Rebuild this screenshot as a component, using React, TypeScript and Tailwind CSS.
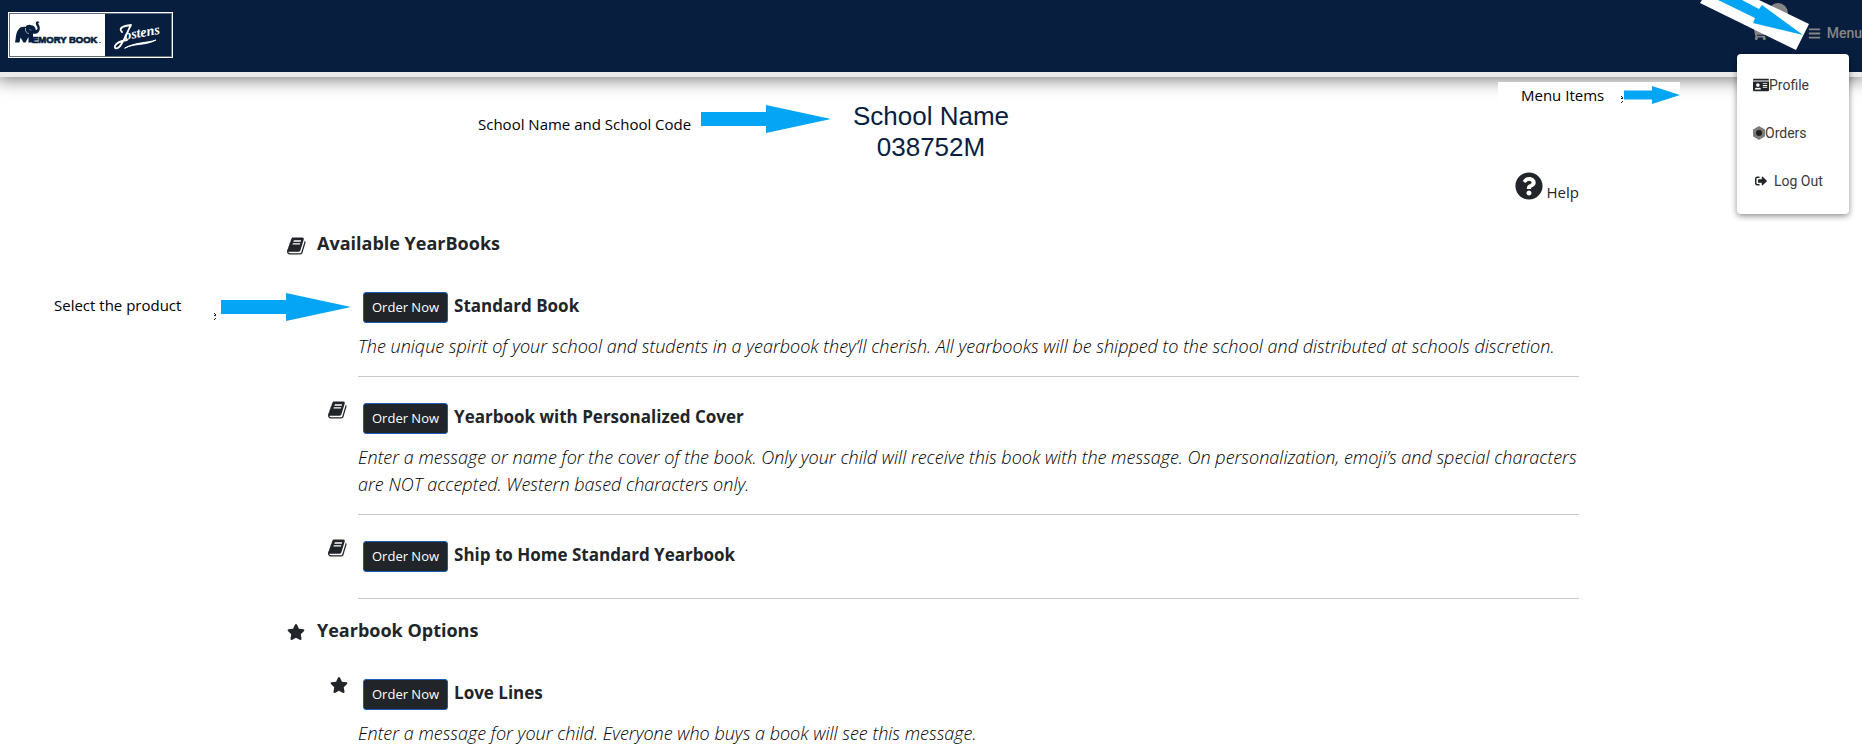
import React from "react";
import {
  FaBars,
  FaIdCard,
  FaQuestionCircle,
  FaShoppingCart,
  FaSignOutAlt,
  FaStar,
} from "react-icons/fa";

const BOOK_PATH =
  "M1639 478q40 57 18 129l-275 906q-19 64-76.500 107.500t-122.500 43.500h-923q-77 0-148.500-53.500t-99.500-131.500q-24-67-2-127 0-4 3-27t4-37q1-8-3-21.500t-3-19.500q2-11 8-21t16.500-23.500 16.500-23.500q23-38 45-91.500t30-91.500q3-10 .500-30t-.500-28q3-11 17-28t17-23q21-36 42-92t25-90q1-9-2.500-32t.500-28q4-13 22-30.500t22-22.500q19-26 42.500-84.500t27.500-96.500q1-8-3-25.500t-2-26.500q2-8 9-18t18-23 17-21q8-12 16.500-30.500t15-35 16-36 19.500-32 26.500-23.500 36-11.500 47.500 5.500l-1 3q38-9 51-9h761q74 0 114 56t18 130l-274 906q-36 119-71.500 153.500t-128.500 34.500h-869q-27 0-38 15-11 16-1 43 24 70 144 70h923q29 0 56-15.500t35-41.500l300-987q7-22 5-57 38 15 59 43zm-1064 2q-4 13 2 22.500t20 9.500h608q13 0 25.500-9.500t16.500-22.500l21-64q4-13-2-22.500t-20-9.500h-608q-13 0-25.500 9.500t-16.500 22.500zm-83 256q-4 13 2 22.500t20 9.500h608q13 0 25.500-9.500t16.500-22.500l21-64q4-13-2-22.500t-20-9.500h-608q-13 0-25.500 9.500t-16.500 22.500z";

function BookIcon() {
  return (
    <svg viewBox="0 0 1792 1792" className="size-5 fill-current" aria-hidden="true">
      <path d={BOOK_PATH} />
    </svg>
  );
}

function StarIcon() {
  return <FaStar className="size-[18px]" aria-hidden="true" />;
}

function Arrow({ className }: { className: string }) {
  return (
    <svg viewBox="0 0 130 28" preserveAspectRatio="none" className={className} aria-hidden="true">
      <path d="M0 7H65V0L130 14L65 28V21H0Z" fill="#03a5f4" />
    </svg>
  );
}

function Speck() {
  return (
    <svg viewBox="0 0 3 8" className="h-2 w-[3px]" aria-hidden="true">
      <path d="M0 0H1V1H2V3H0V2H1V1H0ZM1 5H2V6H1V7H0V6H1Z" fill="#222" />
    </svg>
  );
}

function Logo() {
  return (
    <svg viewBox="0 0 165 46" className="h-[46px] w-[165px]" role="img" aria-label="Memory Book Jostens">
      <rect width="165" height="46" fill="#fff" />
      <rect x="1.500" y="1.500" width="162" height="43" fill="none" stroke="#5f6c84" />
      <rect x="97" y="2" width="66" height="42" fill="#071e3f" />
      <path
        d="M7 30.500C8 27 7.500 21 10.500 17.500C12 15 15 14.500 17.500 15C18.500 12.500 22 12 24 13.500C26.500 13.500 27.500 16 27.800 18C29.500 18 30 16.500 29 14.500C27.500 12 27.500 9.500 29.500 9.200L31.500 10L30 11.500C32.500 14.500 32.500 19 29.500 21C28 22 26 22 25 21.500V30.500H20.500V25L17.500 30.500H15.500L12.500 25.500L11.500 30.500Z"
        fill="#071e3f"
      />
      <path d="M17.500 16C17 19 18.500 21.500 21 21.500M21.500 17L23 18.500" fill="none" stroke="#fff" strokeWidth="0.600" />
      <text
        x="24"
        y="30.500"
        fontSize="9.500"
        fill="#071e3f"
        stroke="#071e3f"
        strokeWidth="0.700"
        fontFamily="Liberation Sans, Arial, sans-serif"
        fontWeight="700"
      >
        EMORY BOOK
      </text>
      <rect x="91" y="30" width="2" height="1" fill="#8791a3" />
      <g fill="none" stroke="#fff" strokeLinecap="round" strokeLinejoin="round">
        <path d="M114 20C110 16 115 14 123 13C120 18 118 25 114 31C111 37 106 38 107 34C108 31 113 29 119 28" strokeWidth="1.800" />
        <path d="M117 36C126 31 137 34 148 28C140 31 127 30 117 36Z" strokeWidth="1" fill="#fff" />
      </g>
      <text
        x="117"
        y="28"
        fontSize="14"
        fill="#fff"
        fontStyle="italic"
        fontWeight="700"
        fontFamily="Liberation Serif, Times New Roman, serif"
        transform="rotate(-10 117 28)"
      >
        ostens
      </text>
    </svg>
  );
}

function OrdersIcon() {
  return (
    <svg viewBox="0 0 12 14" className="h-[14px] w-3" aria-hidden="true">
      <path d="M6 0L12 3.500V10.500L6 14L0 10.500V3.500Z" fill="#858585" />
      <path d="M6 1V13M1 4L11 10M11 4L1 10M3 2L9 12M9 2L3 12M0 7H12" stroke="#555" strokeWidth="0.500" />
      <circle cx="6" cy="7" r="3" fill="#222" />
    </svg>
  );
}

type Item = { title: string; description?: string; icon?: React.ReactNode };

function Product({ title, description, icon }: Item) {
  return (
    <li className="flex">
      <div className="-mt-[3px] flex w-[75px] shrink-0 justify-end pr-[10px]">{icon}</div>
      <div className="min-w-0 grow border-b border-[#c8c9ca] pb-4">
        <div className="flex h-[41px] items-start gap-[6px] pl-[5px]">
          <button
            type="button"
            className="h-[31px] shrink-0 rounded-[3px] border border-[#1a5cb8] bg-[#212529] px-2 text-[13px] text-white"
          >
            Order Now
          </button>
          <h3 className="text-[17px] leading-7 font-bold">{title}</h3>
        </div>
        {description && (
          <p className="text-lg leading-[27px] font-light text-black italic">{description}</p>
        )}
      </div>
    </li>
  );
}

function Section({ title, icon, items }: { title: string; icon: React.ReactNode; items: Item[] }) {
  return (
    <section>
      <h2 className="flex h-[63px] items-start text-lg leading-7 font-bold">
        <span className="flex w-[34px] shrink-0 pt-[7px] pl-1">{icon}</span>
        {title}
      </h2>
      <ul className="flex flex-col gap-[26px]">
        {items.map((item) => (
          <Product key={item.title} {...item} />
        ))}
      </ul>
    </section>
  );
}

const BOOKS: Item[] = [
  {
    title: "Standard Book",
    description:
      "The unique spirit of your school and students in a yearbook they’ll cherish. All yearbooks will be shipped to the school and distributed at schools discretion.",
  },
  {
    title: "Yearbook with Personalized Cover",
    description:
      "Enter a message or name for the cover of the book. Only your child will receive this book with the message. On personalization, emoji’s and special characters are NOT accepted. Western based characters only.",
    icon: <BookIcon />,
  },
  { title: "Ship to Home Standard Yearbook", icon: <BookIcon /> },
];

const OPTIONS: Item[] = [
  {
    title: "Love Lines",
    description: "Enter a message for your child. Everyone who buys a book will see this message.",
    icon: <StarIcon />,
  },
];

export default function App() {
  return (
    <div className="relative h-screen overflow-hidden bg-white font-['Open_Sans','Noto_Sans',sans-serif] text-[#212529]">
      <header className="relative flex h-[77px] items-start justify-between border-b-[5px] border-[#ebebeb] bg-[#071e3f] pt-3 pl-2 shadow-[0_0_16px_3px_rgba(0,0,0,0.5)]">
        <Logo />
        <nav className="flex items-center gap-[41px] pt-[11px] font-[Roboto,sans-serif] text-sm font-medium text-[#858585]">
          <a href="#cart" aria-label="Cart" className="relative">
            <FaShoppingCart className="size-4" />
            <span className="absolute -top-[22px] left-[17px] size-5 rounded-full bg-[#858585]" />
          </a>
          <button type="button" className="flex items-center gap-[6px]">
            <FaBars className="size-[13px]" />
            Menu
          </button>
        </nav>
      </header>

      <main className="mx-auto max-w-[1320px] px-3 pt-6">
        <h1 className="text-center font-['Liberation_Sans',Arial,sans-serif] text-[26px] leading-[31px] text-[#071e3f]">
          School Name
          <br />
          038752M
        </h1>
        <div className="flex h-[66px] justify-end pt-[9px]">
          <a href="#help" className="flex h-8 items-end gap-1 text-[15px] leading-6">
            <FaQuestionCircle className="mb-1 size-7" />
            Help
          </a>
        </div>
        <div className="flex flex-col gap-[17px]">
          <Section title="Available YearBooks" icon={<BookIcon />} items={BOOKS} />
          <Section title="Yearbook Options" icon={<StarIcon />} items={OPTIONS} />
        </div>
      </main>

      <div className="absolute top-[54px] right-[13px] flex h-40 w-28 flex-col rounded-[4px] bg-white pt-[7px] pl-4 font-[Roboto,sans-serif] text-sm text-[#3a3a3a] shadow-[0_2px_6px_rgba(0,0,0,0.45)]">
        <a href="#profile" className="flex h-12 items-center">
          <FaIdCard className="size-4 text-[#212529]" />
          Profile
        </a>
        <a href="#orders" className="flex h-12 items-center">
          <OrdersIcon />
          Orders
        </a>
        <a href="#logout" className="flex h-12 items-center gap-[7px] pl-[2px]">
          <FaSignOutAlt className="size-3 text-[#212529]" />
          Log Out
        </a>
      </div>

      <div className="absolute top-[105px] left-[478px] flex w-[353px] justify-between text-[15px] leading-6 whitespace-nowrap text-black">
        <span className="pt-[7px]">School Name and School Code</span>
        <Arrow className="h-7 w-[130px]" />
      </div>
      <div className="absolute top-[293px] left-[54px] flex w-[297px] justify-between text-[15px] leading-6 whitespace-nowrap text-black">
        <span>Select the product</span>
        <span className="flex items-end gap-1">
          <Speck />
          <Arrow className="h-7 w-[130px]" />
        </span>
      </div>
      <div className="absolute top-[82px] left-[1498px] flex w-[182px] items-center justify-between bg-white pt-px pl-[23px] text-[15px] leading-6 text-black">
        <span>Menu Items</span>
        <span className="flex items-end">
          <Speck />
          <Arrow className="h-[18px] w-[56px]" />
        </span>
      </div>
      <svg viewBox="0 0 112 50" className="absolute top-0 left-[1698px] h-[50px] w-28" aria-hidden="true">
        <path d="M2 3L4 0H61L111 24L98 50Z" fill="#fff" />
        <path d="M20 0L57 18L55 23L105 35L64 5L61 9L44 0Z" fill="#03a5f4" />
      </svg>
    </div>
  );
}
